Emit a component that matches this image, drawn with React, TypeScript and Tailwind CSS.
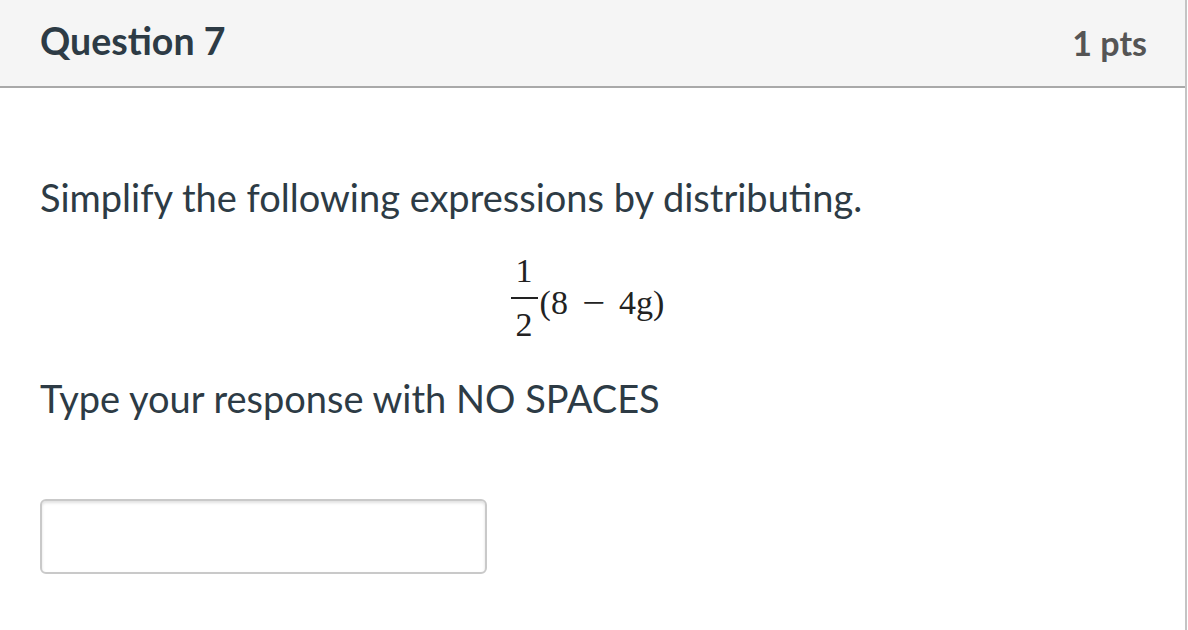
import React from "react";

export default function App() {
  return (
    <div className="w-[1188px] h-[630px] bg-white overflow-hidden" style={{ fontFamily: "Lato, 'Noto Sans', sans-serif" }}>
      <div className="w-[1187px] h-full border-r-2 border-[#c4c4c4]">
        <div className="h-[88px] bg-[#f5f5f5] border-b-2 border-[#a9a9a9] pl-[40px] pr-[38px] flex items-center justify-between">
          <div className="text-[37.5px] font-bold text-[#2d3b45] leading-none -mt-[4px]">Question 7</div>
          <div className="text-[34px] font-bold text-[#555555] leading-none">1 pts</div>
        </div>
        <div className="px-[40px] pt-[85px]">
          <p className="text-[38px] leading-[48px] text-[#2d3b45]">Simplify the following expressions by distributing.</p>
          <div className="mt-[34px] flex justify-center" style={{ fontFamily: "'Liberation Serif', 'Times New Roman', serif" }}>
            <div className="flex items-start text-[34px] leading-[32px] text-[#222222] -ml-[10px]">
              <div className="flex flex-col items-center w-[27px]">
                <span>1</span>
                <div className="mt-[10px] h-[1.5px] w-[27px] bg-[#222222]" />
                <span className="mt-[10px]">2</span>
              </div>
              <div className="mt-[32px] flex">
                <span className="ml-[2px]">(8</span>
                <span className="mx-[16px] scale-x-[1.2]">−</span>
                <span>4g)</span>
              </div>
            </div>
          </div>
          <p className="mt-[33px] text-[38px] leading-[48px] text-[#2d3b45]">Type your response with NO SPACES</p>
          <div className="mt-[77px] w-[447px] h-[75px] rounded-[6px] border-2 border-[#c9c9c9] bg-white shadow-[inset_0_2px_3px_rgba(0,0,0,0.12)]" />
        </div>
      </div>
    </div>
  );
}
